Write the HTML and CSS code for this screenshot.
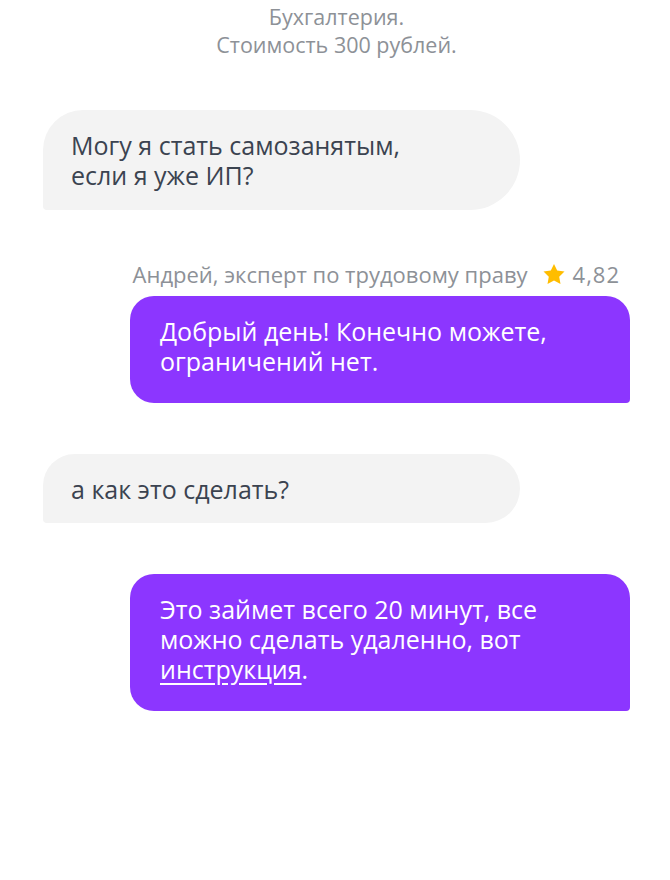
FILE: index.html
```html
<!DOCTYPE html>
<html lang="ru">

<head>
    <meta charset="UTF-8">
    <meta name="viewport" content="width=device-width, initial-scale=1.0">
    <title>Чат с экспертом</title>
    <link rel="stylesheet" href="styles.css">
</head>

<body>
    <div class="chat">
        <p class="service">Бухгалтерия.<br>Стоимость 300 рублей.</p>

        <div class="msg msg-user">
            <div class="bubble">Могу я стать самозанятым,<br>если я уже ИП?</div>
        </div>

        <div class="msg msg-expert">
            <div class="author">
                <span class="author-name">Андрей, эксперт по трудовому праву</span>
                <svg class="star" width="24" height="23" viewBox="0 0 24 23">
                    <path d="M12 1l3.2 6.6 7.3 1-5.3 5.1 1.3 7.2L12 17.5l-6.5 3.4 1.3-7.2L1.5 8.6l7.3-1z" fill="#ffbd00"/>
                </svg>
                <span class="rating">4,82</span>
            </div>
            <div class="bubble">Добрый день! Конечно можете,<br>ограничений нет.</div>
        </div>

        <div class="msg msg-user">
            <div class="bubble bubble-short">а как это сделать?</div>
        </div>

        <div class="msg msg-expert">
            <div class="bubble">Это займет всего 20 минут, все<br>можно сделать удаленно, вот<br><a href="#">инструкция</a>.</div>
        </div>
    </div>
</body>

</html>
```

FILE: styles.css
```css
body {
    margin: 0;
    font-family: 'Open Sans', 'Noto Sans', sans-serif;
    background-color: #fff;
    color: #3b4350;
}

.chat {
    padding: 3px 40px 40px 43px;
    display: flex;
    flex-direction: column;
    gap: 51px;
}

.service {
    margin: 0;
    text-align: center;
    font-size: 21.5px;
    line-height: 28px;
    color: #8d9197;
}

.msg {
    display: flex;
    flex-direction: column;
}

.msg-user {
    align-items: flex-start;
}

.msg-expert {
    align-items: flex-end;
}

.bubble {
    font-size: 25px;
    line-height: 30px;
}

.msg-user .bubble {
    width: 477px;
    box-sizing: border-box;
    padding: 20px 28px 20px;
    background-color: #f3f3f3;
    border-radius: 40px 50px 50px 4px;
}

.msg-user .bubble-short {
    padding: 20px 28px 19px;
    border-radius: 32px 35px 35px 4px;
}

.msg-expert .bubble {
    width: 500px;
    box-sizing: border-box;
    padding: 20px 30px 27px;
    background-color: #8c36ff;
    color: #fff;
    border-radius: 24px 24px 4px 24px;
}

.bubble a {
    color: #fff;
    text-decoration: underline;
    text-underline-offset: 4px;
}

.author {
    display: flex;
    align-items: center;
    gap: 7px;
    margin: 0 10px 9px 0;
    font-size: 22px;
    line-height: 26px;
    color: #8d9197;
}

.author-name {
    margin-right: 7px;
}

.star {
    display: block;
}

.rating {
    letter-spacing: 1px;
}
```
